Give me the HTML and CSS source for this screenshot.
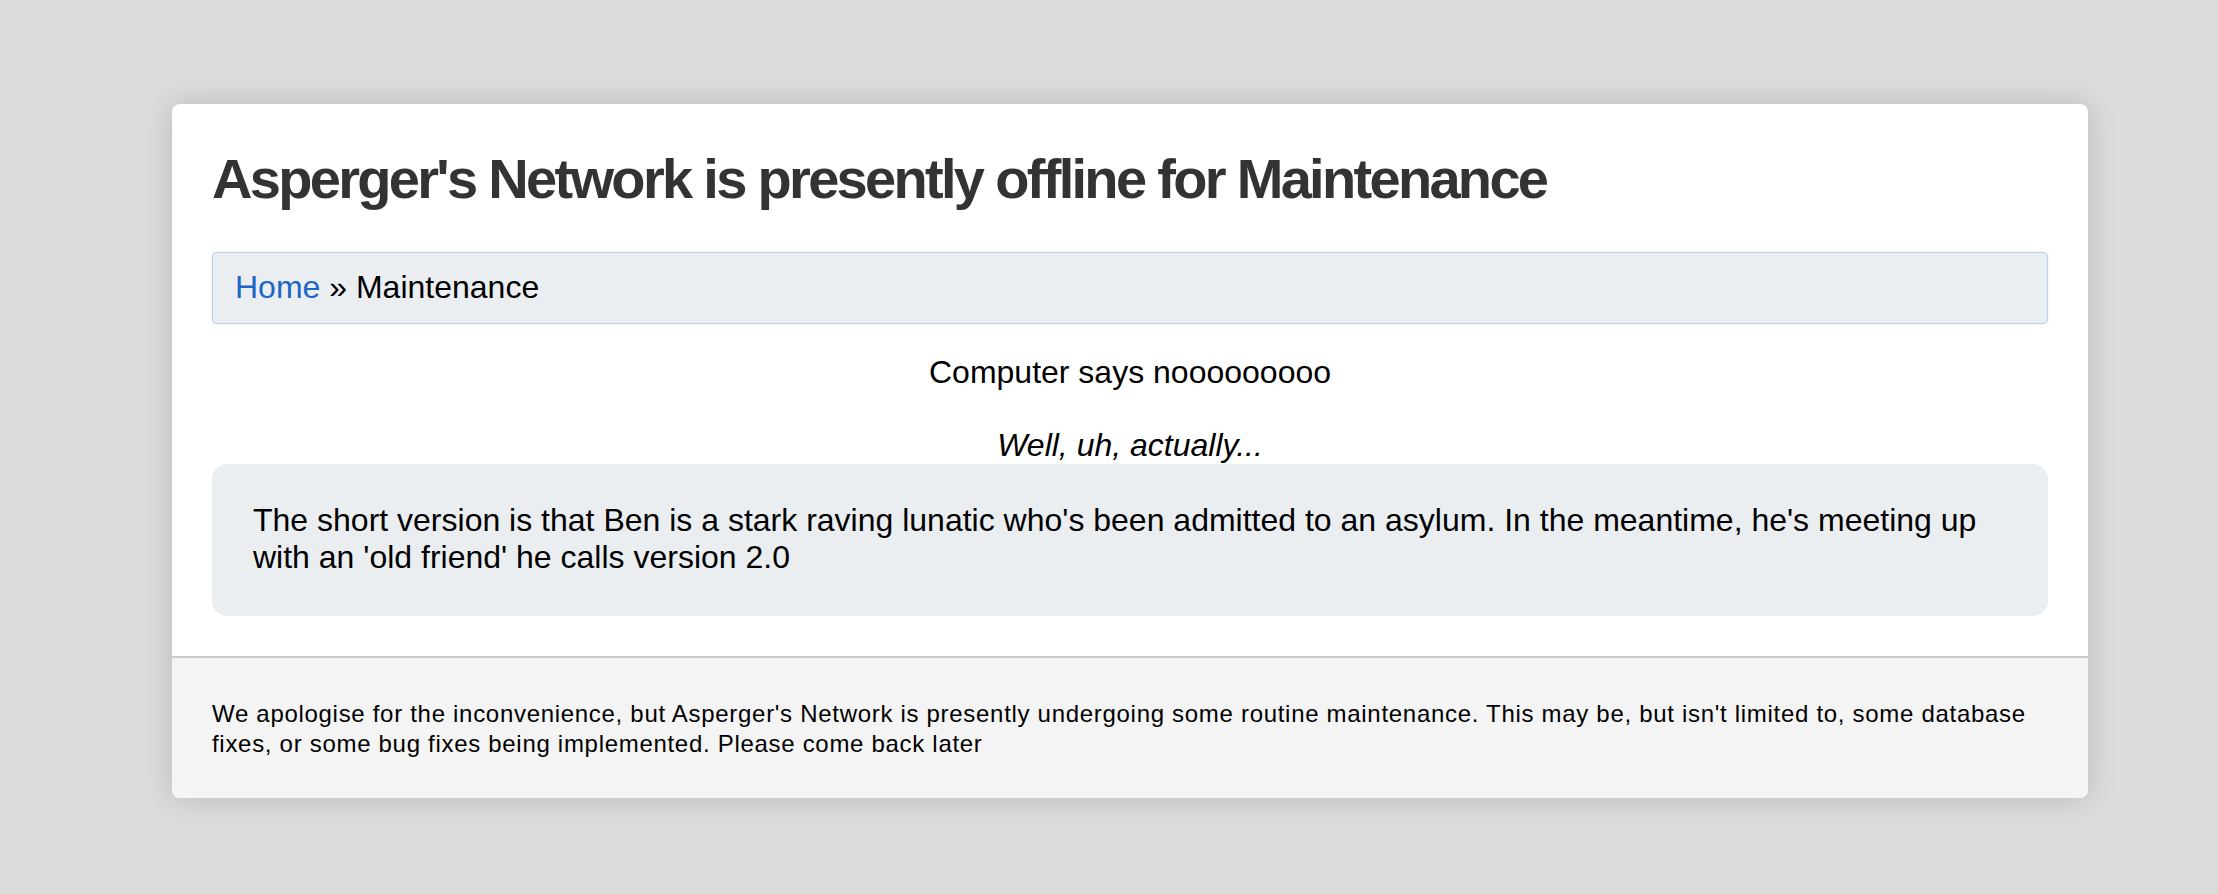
FILE: index.html
```html
<!DOCTYPE html>
<html lang="en">
<head>
<meta charset="utf-8">
<title>Asperger's Network - Maintenance</title>
<link rel="stylesheet" href="styles.css">
</head>
<body>
<div class="card">
  <main class="card-main">
    <h1 class="title">Asperger's Network is presently offline for Maintenance</h1>
    <nav class="breadcrumb"><a class="crumb-link" href="#">Home</a> &raquo; Maintenance</nav>
    <p class="lead">Computer says nooooooooo</p>
    <p class="aside">Well, uh, actually...</p>
    <div class="note">The short version is that Ben is a stark raving lunatic who's been admitted to an asylum. In the meantime, he's meeting up with an 'old friend' he calls version 2.0</div>
  </main>
  <footer class="card-foot">We apologise for the inconvenience, but Asperger's Network is presently undergoing some routine maintenance. This may be, but isn't limited to, some database fixes, or some bug fixes being implemented. Please come back later</footer>
</div>
</body>
</html>
```

FILE: styles.css
```css
html, body {
  margin: 0;
  padding: 0;
}
body {
  background: #dcdcdc;
  font-family: "Liberation Sans", Arial, Helvetica, sans-serif;
  color: #000;
  padding-top: 104px;
  height: 790px;
}
.card {
  margin: 0 130px 0 172px;
  background: #fff;
  border-radius: 8px;
  overflow: hidden;
  box-shadow: 0 0 30px rgba(0, 0, 0, 0.16);
}
.card-main {
  padding: 40px 40px 40px;
}
.title {
  margin: 3px 0 0;
  font-size: 56px;
  line-height: 64px;
  font-weight: bold;
  color: #333;
  letter-spacing: -0.048em;
}
.breadcrumb {
  margin-top: 41px;
  box-sizing: border-box;
  height: 72px;
  padding: 16px 22px 0;
  font-size: 32px;
  line-height: 37px;
  background: #ebeef1;
  border: 1px solid #bdd0e6;
  border-radius: 5px;
  box-shadow: 0 0 2px rgba(120, 160, 210, 0.35);
}
.crumb-link {
  color: #1d66c6;
  text-decoration: none;
}
.lead {
  margin: 30px 0 0;
  font-size: 32px;
  line-height: 37px;
  text-align: center;
}
.aside {
  margin: 36px 0 0;
  font-size: 32px;
  line-height: 37px;
  font-style: italic;
  text-align: center;
}
.note {
  background: #ebeef1;
  border-radius: 15px;
  padding: 38px 41px 40px;
  font-size: 32px;
  line-height: 37px;
}
.card-foot {
  border-top: 2px solid #cbcbcb;
  background: #f4f4f4;
  padding: 41px 40px 39px;
  font-size: 24px;
  line-height: 30px;
  letter-spacing: 0.7px;
}
```
